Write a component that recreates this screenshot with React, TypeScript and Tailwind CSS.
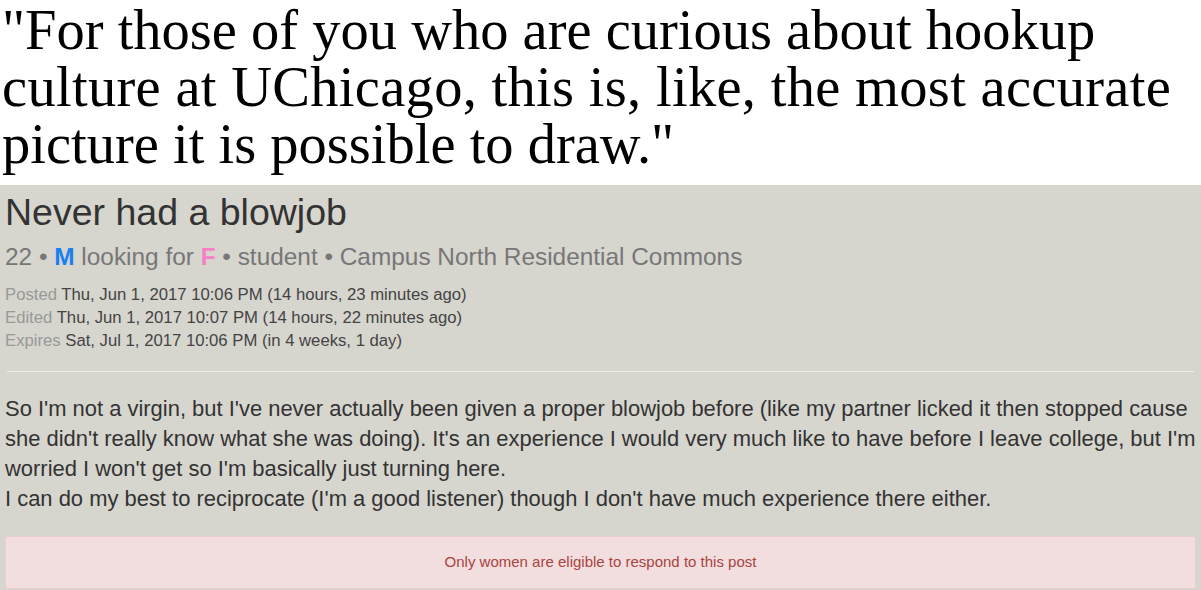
import React from "react";

export default function App() {
  return (
    <div className="w-[1201px] h-[590px] overflow-hidden bg-white" style={{ fontFamily: '"Liberation Sans", Arial, sans-serif' }}>
      <div className="h-[185px] pt-[2px] pl-[2px] text-black text-[56.5px] leading-[57px] whitespace-nowrap" style={{ fontFamily: '"Liberation Serif", "Times New Roman", serif' }}>
        <div>"For those of you who are curious about hookup</div>
        <div className="tracking-[0.3px]">culture at UChicago, this is, like, the most accurate</div>
        <div>picture it is possible to draw."</div>
      </div>
      <div className="h-[405px] bg-[#d6d5ce] px-[5px]">
        <div className="pt-[3px] text-[37.5px] leading-[48px] text-[#333]">Never had a blowjob</div>
        <div className="text-[24.4px] leading-[30px] text-[#777] mt-[6px]">
          22 • <span className="font-bold text-[#1a7ff0]">M</span> looking for <span className="font-bold text-[#f77fc4]">F</span> • student • Campus North Residential Commons
        </div>
        <div className="mt-[11px] text-[16.7px] leading-[23px] text-[#444]">
          <div><span className="text-[#999]">Posted</span> Thu, Jun 1, 2017 10:06 PM (14 hours, 23 minutes ago)</div>
          <div><span className="text-[#999]">Edited</span> Thu, Jun 1, 2017 10:07 PM (14 hours, 22 minutes ago)</div>
          <div><span className="text-[#999]">Expires</span> Sat, Jul 1, 2017 10:06 PM (in 4 weeks, 1 day)</div>
        </div>
        <div className="mt-[19px] mx-[2px] border-t border-[#eeede8]" />
        <div className="mt-[22px] text-[21.95px] leading-[30px] text-[#333] whitespace-nowrap">
          <div>So I'm not a virgin, but I've never actually been given a proper blowjob before (like my partner licked it then stopped cause</div>
          <div>she didn't really know what she was doing). It's an experience I would very much like to have before I leave college, but I'm</div>
          <div>worried I won't get so I'm basically just turning here.</div>
          <div>I can do my best to reciprocate (I'm a good listener) though I don't have much experience there either.</div>
        </div>
        <div className="mt-[22px] h-[53px] bg-[#f2dede] border border-[#ebccd1] rounded-[3px] flex items-center justify-center text-[15px] text-[#a94442]">
          Only women are eligible to respond to this post
        </div>
      </div>
    </div>
  );
}
